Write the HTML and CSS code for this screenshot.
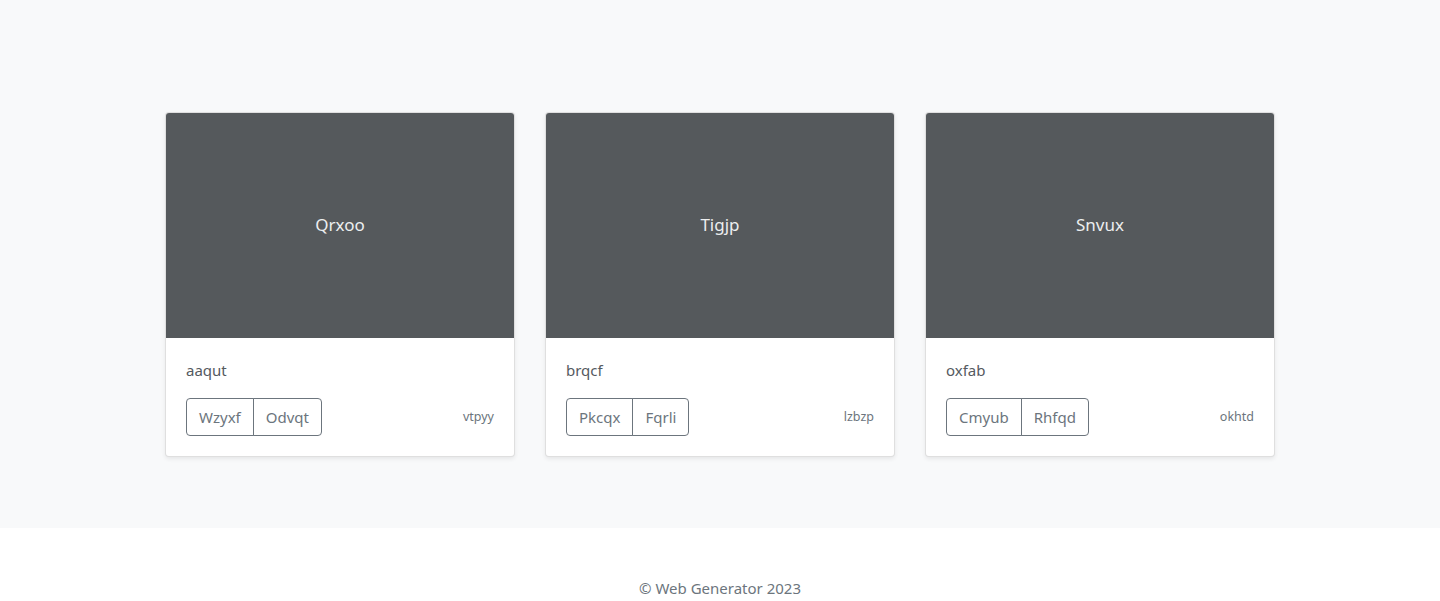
FILE: index.html
```html
<!DOCTYPE html>
<html lang="en">
<head>
<meta charset="utf-8">
<title>Album</title>
<link rel="stylesheet" href="styles.css">
</head>
<body>
<main class="album">
  <div class="container">
    <div class="row">
      <div class="col">
        <div class="card">
          <div class="thumb"><span>Qrxoo</span></div>
          <div class="card-body">
            <p class="card-text">aaqut</p>
            <div class="card-foot">
              <div class="btn-group">
                <button class="btn">Wzyxf</button>
                <button class="btn">Odvqt</button>
              </div>
              <small class="muted">vtpyy</small>
            </div>
          </div>
        </div>
      </div>
      <div class="col">
        <div class="card">
          <div class="thumb"><span>Tigjp</span></div>
          <div class="card-body">
            <p class="card-text">brqcf</p>
            <div class="card-foot">
              <div class="btn-group">
                <button class="btn">Pkcqx</button>
                <button class="btn">Fqrli</button>
              </div>
              <small class="muted">lzbzp</small>
            </div>
          </div>
        </div>
      </div>
      <div class="col">
        <div class="card">
          <div class="thumb"><span>Snvux</span></div>
          <div class="card-body">
            <p class="card-text">oxfab</p>
            <div class="card-foot">
              <div class="btn-group">
                <button class="btn">Cmyub</button>
                <button class="btn">Rhfqd</button>
              </div>
              <small class="muted">okhtd</small>
            </div>
          </div>
        </div>
      </div>
    </div>
  </div>
</main>
<footer class="footer">
  <p>© Web Generator 2023</p>
</footer>
</body>
</html>
```
FILE: styles.css
```css
* { box-sizing: border-box; }
html, body {
  margin: 0;
  padding: 0;
}
body {
  font-family: "Noto Sans", "Open Sans", sans-serif;
  font-size: 15px;
  line-height: 24px;
  color: #212529;
  background: #fff;
}
.album {
  background: #f8f9fa;
  padding: 112px 0 48px;
}
.container {
  width: 1140px;
  margin: 0 auto;
}
.row {
  display: flex;
}
.col {
  flex: 1 1 0;
  padding: 0 15px;
}
.card {
  background: #fff;
  border: 1px solid rgba(0,0,0,.125);
  border-radius: 4px;
  box-shadow: 0 .125rem .25rem rgba(0,0,0,.075);
  margin-bottom: 23px;
  overflow: hidden;
}
.thumb {
  height: 225px;
  background: #55595c;
  display: flex;
  align-items: center;
  justify-content: center;
  color: #eceeef;
  font-size: 17px;
  padding-bottom: 2px;
}
.card-body {
  padding: 20px;
}
.card-text {
  margin: 0 0 16px;
  color: #555a5f;
}
.card-foot {
  display: flex;
  justify-content: space-between;
  align-items: center;
}
.btn-group {
  display: flex;
}
.btn {
  font-family: inherit;
  font-size: 15px;
  line-height: 24px;
  height: 38px;
  padding: 6px 12px;
  color: #6c757d;
  background: transparent;
  border: 1px solid #6c757d;
  margin: 0;
}
.btn:first-child {
  border-radius: 4px 0 0 4px;
}
.btn:last-child {
  border-radius: 0 4px 4px 0;
  margin-left: -1px;
}
.muted {
  font-size: 12.5px;
  color: #6c757d;
}
.footer {
  padding: 48px 0 1px;
  text-align: center;
  color: #6c757d;
}
.footer p {
  margin: 0;
}
```
